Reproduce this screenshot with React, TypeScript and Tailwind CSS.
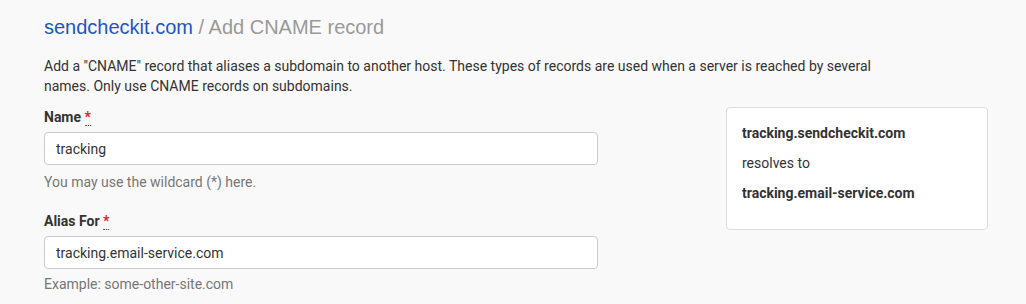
export default function App() {
  return (
    <div className="min-h-[304px] bg-[#f9f9f9] pl-[44px] pr-[38px] pt-[13px] font-['Roboto',sans-serif] text-[14px] leading-[20px] text-[#333]">
      {/* Breadcrumb title */}
      <h1 className="font-['Liberation_Sans',Arial,sans-serif] text-[20px] leading-[28px] font-normal text-[#999]">
        <a href="#" className="text-[#1d55c4]">
          sendcheckit.com
        </a>{" "}
        / Add CNAME record
      </h1>

      <p className="mt-[15px] max-w-[860px]">
        Add a "CNAME" record that aliases a subdomain to another host. These types of records are used when a server is
        reached by several names. Only use CNAME records on subdomains.
      </p>

      <div className="mt-[11px] flex items-start">
        {/* Form */}
        <div className="w-[554px]">
          <label className="block font-bold">
            Name{" "}
            <abbr title="required" className="text-[#d9232e] no-underline border-b border-dotted border-[#d9232e]">
              *
            </abbr>
          </label>
          <input
            readOnly
            value="tracking"
            className="mt-[5px] block h-[33px] w-full rounded-[4px] border border-[#ccc] bg-white px-[11px] text-[14px] text-[#333] outline-none"
          />
          <p className="mt-[7px] text-[#777]">You may use the wildcard (*) here.</p>

          <label className="mt-[19px] block font-bold">
            Alias For{" "}
            <abbr title="required" className="text-[#d9232e] no-underline border-b border-dotted border-[#d9232e]">
              *
            </abbr>
          </label>
          <input
            readOnly
            value="tracking.email-service.com"
            className="mt-[5px] block h-[33px] w-full rounded-[4px] border border-[#ccc] bg-white px-[11px] text-[14px] text-[#333] outline-none"
          />
          <p className="mt-[5px] text-[#777]">Example: some-other-site.com</p>
        </div>

        {/* Preview card */}
        <div className="ml-auto w-[262px] rounded-[4px] border border-[#ddd] bg-white px-[15px] pt-[15px] pb-[16px]">
          <p className="mb-[10px] font-bold">tracking.sendcheckit.com</p>
          <p className="mb-[10px]">resolves to</p>
          <p className="mb-[10px] font-bold">tracking.email-service.com</p>
        </div>
      </div>
    </div>
  );
}
